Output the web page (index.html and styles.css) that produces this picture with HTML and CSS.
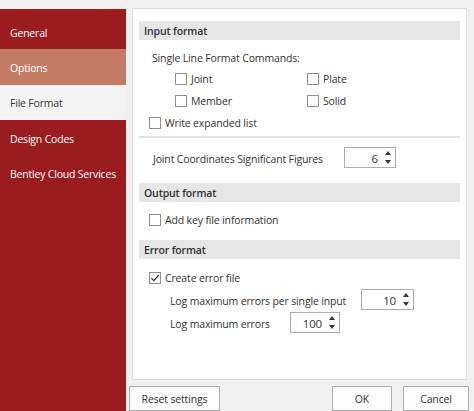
FILE: index.html
```html
<!DOCTYPE html>
<html>
<head>
<meta charset="utf-8">
<link rel="stylesheet" href="styles.css">
</head>
<body>
<div class="app">
  <nav class="sidebar">
    <div class="nav-item nav-first">General</div>
    <div class="nav-item nav-hover">Options</div>
    <div class="nav-item nav-active">File Format</div>
    <div class="nav-item">Design Codes</div>
    <div class="nav-item">Bentley Cloud Services</div>
  </nav>
  <div class="main">
    <div class="panel">
      <div class="section-head">Input format</div>
      <div class="row row-label">Single Line Format Commands:</div>
      <div class="check-grid">
        <label class="check"><span class="box"></span>Joint</label>
        <label class="check"><span class="box"></span>Plate</label>
        <label class="check"><span class="box"></span>Member</label>
        <label class="check"><span class="box"></span>Solid</label>
      </div>
      <label class="row check indent-box"><span class="box"></span>Write expanded list</label>
      <div class="separator"></div>
      <div class="row spin-row indent-joint">
        <span class="spin-label label-joint">Joint Coordinates Significant Figures</span>
        <div class="spin spin-w52"><span class="spin-val">6</span><span class="arrows"><span class="up"></span><span class="down"></span></span></div>
      </div>
      <div class="section-head head-output">Output format</div>
      <label class="row check indent-box row-addkey"><span class="box"></span>Add key file information</label>
      <div class="section-head head-error">Error format</div>
      <label class="row check indent-box row-create"><span class="box checked"><svg viewBox="0 0 12 12" width="12" height="12"><path d="M2.3 6.2 L4.8 8.7 L9.8 3" fill="none" stroke="#333" stroke-width="1.2"/></svg></span>Create error file</label>
      <div class="row spin-row indent-log">
        <span class="spin-label label-log1">Log maximum errors per single input</span>
        <div class="spin spin-w53"><span class="spin-val">10</span><span class="arrows"><span class="up"></span><span class="down"></span></span></div>
      </div>
      <div class="row spin-row indent-log row-log2">
        <span class="spin-label label-log2">Log maximum errors</span>
        <div class="spin spin-w50"><span class="spin-val">100</span><span class="arrows"><span class="up"></span><span class="down"></span></span></div>
      </div>
    </div>
    <div class="buttons">
      <button class="btn btn-reset">Reset settings</button>
      <div class="btn-group">
        <button class="btn btn-ok">OK</button>
        <button class="btn btn-cancel">Cancel</button>
      </div>
    </div>
  </div>
</div>
</body>
</html>
```

FILE: styles.css
```css
* { box-sizing: border-box; }
html, body {
  margin: 0;
  padding: 0;
  width: 474px;
  height: 411px;
  overflow: hidden;
  background: #f0f0f0;
  font-family: "Open Sans", "Noto Sans", sans-serif;
  font-size: 10.5px;
  letter-spacing: -0.15px;
  color: #333;
}
.app {
  display: grid;
  grid-template-columns: 126px 1fr;
  height: 411px;
  padding-top: 8px;
}
.sidebar {
  background: #9b1c1f;
  margin-top: 1px;
  padding-top: 4px;
  color: #fff;
}
.nav-item {
  height: 35.5px;
  line-height: 35.5px;
  padding-top: 1.5px;
  padding-left: 10px;
  white-space: nowrap;
  letter-spacing: -0.2px;
}
.nav-first { height: 36px; line-height: 37px; }
.nav-hover { background: #c47b63; }
.nav-active { background: #f3f3f3; color: #333; }
.main {
  display: flex;
  flex-direction: column;
  padding-left: 3px;
  padding-right: 5px;
}
.panel {
  height: 372px;
  margin-left: 3px;
  margin-right: 2px;
  background: #fff;
  border: 1px solid #dedede;
  padding: 12px 6px 0 6px;
}
.section-head {
  height: 19px;
  line-height: 19px;
  padding-top: 1px;
  background: #e6e6e6;
  padding-left: 5px;
  font-weight: 600;
  color: #333;
}
.row {
  height: 22px;
  display: flex;
  align-items: center;
  padding-top: 2px;
}
.row-label {
  margin-top: 6px;
  height: 21px;
  padding-left: 13px;
}
.check-grid {
  display: grid;
  grid-template-columns: 132px 132px;
  grid-auto-rows: 22px;
  padding-left: 36px;
}
.check {
  display: flex;
  align-items: center;
  white-space: nowrap;
  padding-top: 2px;
}
.box {
  width: 12px;
  height: 12px;
  border: 1px solid #8f8f8f;
  background: #fff;
  margin-right: 4px;
  flex: none;
  position: relative;
}
.box svg {
  position: absolute;
  left: -1px;
  top: -1px;
}
.indent-box { padding-left: 10px; }
.separator {
  margin-top: 3px;
  border-top: 2px solid #e3e3e3;
  height: 0;
}
.spin-row { height: 23px; padding-top: 0; }
.spin-label { padding-top: 2px; }
.indent-joint { margin-top: 8px; padding-left: 14px; }
.label-joint { width: 191px; }
.spin {
  height: 21px;
  border: 1px solid #acacac;
  background: #fff;
  display: flex;
  align-items: center;
  justify-content: flex-end;
}
.spin-w52 { width: 52px; }
.spin-w53 { width: 53px; }
.spin-w50 { width: 50px; }
.spin-val { padding-right: 3px; padding-top: 1px; font-size: 11.5px; }
.arrows {
  width: 14px;
  height: 100%;
  display: flex;
  flex-direction: column;
  align-items: center;
  justify-content: center;
  gap: 5px;
}
.up, .down {
  width: 0;
  height: 0;
  border-left: 3px solid transparent;
  border-right: 3px solid transparent;
}
.up { border-bottom: 4px solid #333; }
.down { border-top: 4px solid #333; }
.head-output { margin-top: 14px; }
.row-addkey { margin-top: 6px; }
.head-error { margin-top: 10px; }
.row-create { margin-top: 7px; }
.indent-log { padding-left: 31px; }
.label-log1 { width: 191px; }
.label-log2 { width: 120px; }
.row-log2 { margin-top: 0px; }
.buttons {
  display: flex;
  justify-content: space-between;
  margin-top: 6px;
}
.btn {
  height: 25px;
  background: #fcfcfc;
  border: 1px solid #adadad;
  font-family: inherit;
  font-size: 10.5px;
  letter-spacing: -0.15px;
  color: #333;
  padding: 0;
}
.btn-reset { width: 91px; }
.btn-group { display: flex; gap: 11px; }
.btn-ok { width: 60px; }
.btn-cancel { width: 66px; }
```
